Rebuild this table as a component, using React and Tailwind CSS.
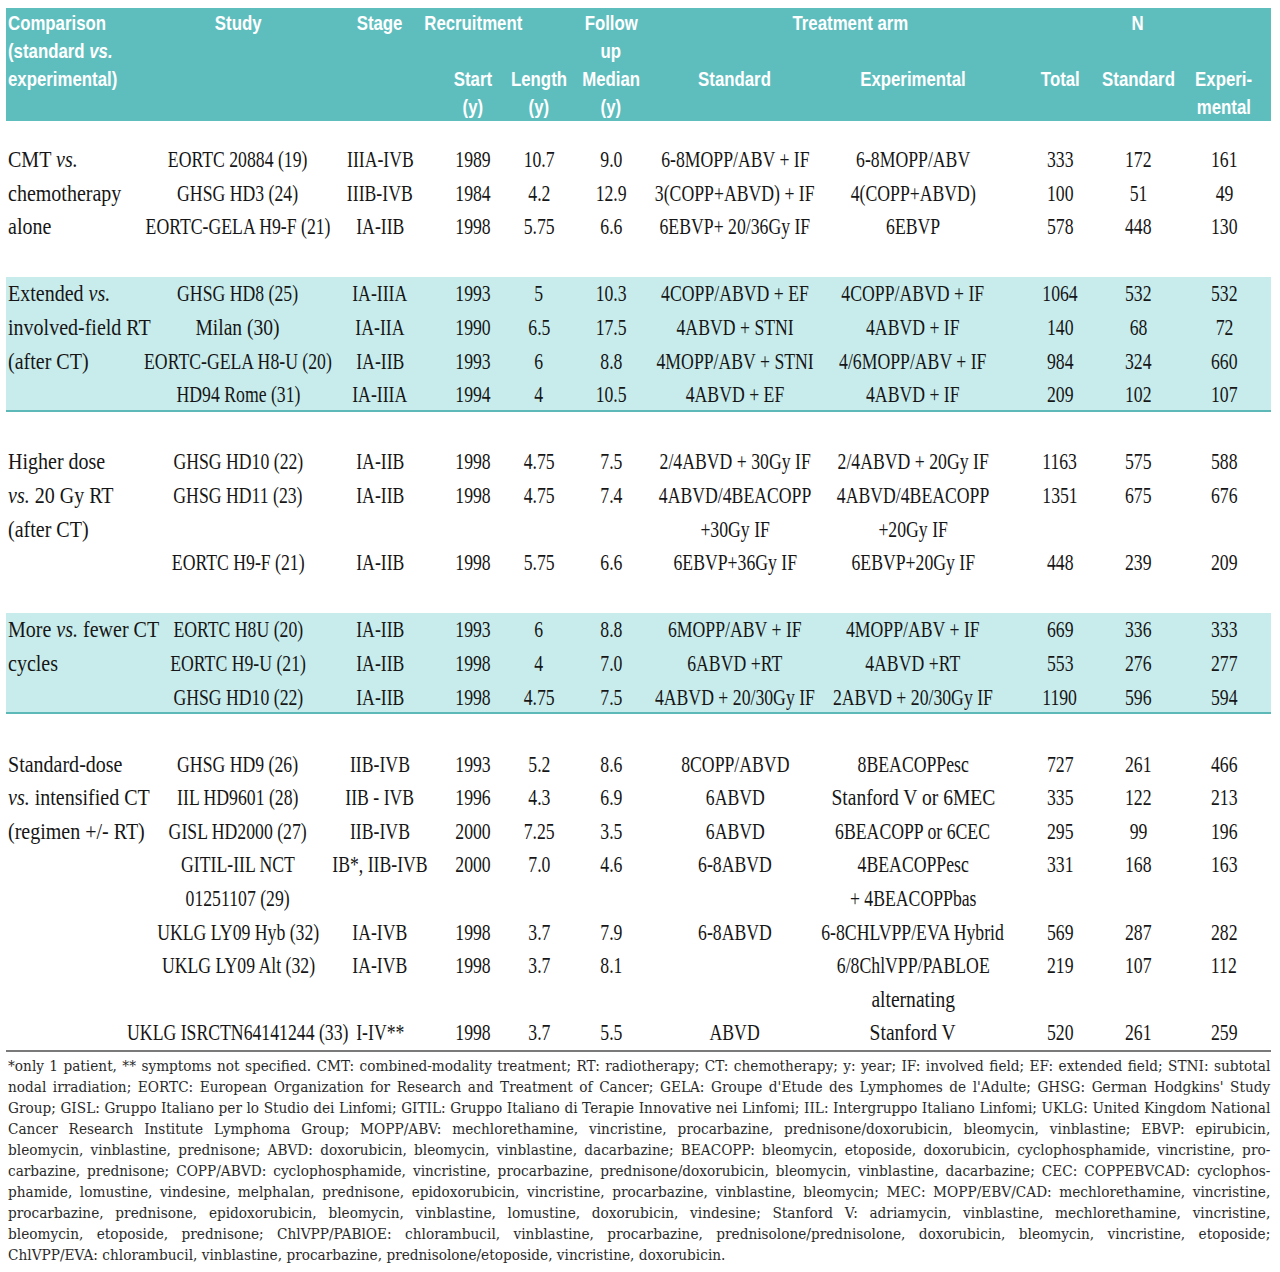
import React from 'react';

const GRID = 'grid grid-cols-[143px_178px_106px_80px_52px_92px_156px_200px_94px_62px_110px]';

const groups = [
  {
    shaded: false,
    span: 'row-span-3',
    comparison: [<>CMT <i>vs.</i></>, 'chemotherapy', 'alone'],
    rows: [
      ['EORTC 20884 (19)', 'IIIA-IVB', '1989', '10.7', '9.0', '6-8MOPP/ABV + IF', '6-8MOPP/ABV', '333', '172', '161'],
      ['GHSG HD3 (24)', 'IIIB-IVB', '1984', '4.2', '12.9', '3(COPP+ABVD) + IF', '4(COPP+ABVD)', '100', '51', '49'],
      ['EORTC-GELA H9-F (21)', 'IA-IIB', '1998', '5.75', '6.6', '6EBVP+ 20/36Gy IF', '6EBVP', '578', '448', '130'],
    ],
  },
  {
    shaded: true,
    span: 'row-span-4',
    comparison: [<>Extended <i>vs.</i></>, 'involved-field RT', '(after CT)'],
    rows: [
      ['GHSG HD8 (25)', 'IA-IIIA', '1993', '5', '10.3', '4COPP/ABVD + EF', '4COPP/ABVD + IF', '1064', '532', '532'],
      ['Milan (30)', 'IA-IIA', '1990', '6.5', '17.5', '4ABVD + STNI', '4ABVD + IF', '140', '68', '72'],
      ['EORTC-GELA H8-U (20)', 'IA-IIB', '1993', '6', '8.8', '4MOPP/ABV + STNI', '4/6MOPP/ABV + IF', '984', '324', '660'],
      ['HD94 Rome (31)', 'IA-IIIA', '1994', '4', '10.5', '4ABVD + EF', '4ABVD + IF', '209', '102', '107'],
    ],
  },
  {
    shaded: false,
    span: 'row-span-3',
    comparison: ['Higher dose', <><i>vs.</i> 20 Gy RT</>, '(after CT)'],
    rows: [
      ['GHSG HD10 (22)', 'IA-IIB', '1998', '4.75', '7.5', '2/4ABVD + 30Gy IF', '2/4ABVD + 20Gy IF', '1163', '575', '588'],
      ['GHSG HD11 (23)', 'IA-IIB', '1998', '4.75', '7.4', ['4ABVD/4BEACOPP', '+30Gy IF'], ['4ABVD/4BEACOPP', '+20Gy IF'], '1351', '675', '676'],
      ['EORTC H9-F (21)', 'IA-IIB', '1998', '5.75', '6.6', '6EBVP+36Gy IF', '6EBVP+20Gy IF', '448', '239', '209'],
    ],
  },
  {
    shaded: true,
    span: 'row-span-3',
    comparison: [<>More <i>vs.</i> fewer CT</>, 'cycles'],
    rows: [
      ['EORTC H8U (20)', 'IA-IIB', '1993', '6', '8.8', '6MOPP/ABV + IF', '4MOPP/ABV + IF', '669', '336', '333'],
      ['EORTC H9-U (21)', 'IA-IIB', '1998', '4', '7.0', '6ABVD +RT', '4ABVD +RT', '553', '276', '277'],
      ['GHSG HD10 (22)', 'IA-IIB', '1998', '4.75', '7.5', '4ABVD + 20/30Gy IF', '2ABVD + 20/30Gy IF', '1190', '596', '594'],
    ],
  },
  {
    shaded: false,
    span: 'row-span-7',
    comparison: ['Standard-dose', <><i>vs.</i> intensified CT</>, '(regimen +/- RT)'],
    rows: [
      ['GHSG HD9 (26)', 'IIB-IVB', '1993', '5.2', '8.6', '8COPP/ABVD', '8BEACOPPesc', '727', '261', '466'],
      ['IIL HD9601 (28)', 'IIB - IVB', '1996', '4.3', '6.9', '6ABVD', 'Stanford V or 6MEC', '335', '122', '213'],
      ['GISL HD2000 (27)', 'IIB-IVB', '2000', '7.25', '3.5', '6ABVD', '6BEACOPP or 6CEC', '295', '99', '196'],
      [['GITIL-IIL NCT', '01251107 (29)'], 'IB*, IIB-IVB', '2000', '7.0', '4.6', '6-8ABVD', ['4BEACOPPesc', '+ 4BEACOPPbas'], '331', '168', '163'],
      ['UKLG LY09 Hyb (32)', 'IA-IVB', '1998', '3.7', '7.9', '6-8ABVD', '6-8CHLVPP/EVA Hybrid', '569', '287', '282'],
      ['UKLG LY09 Alt (32)', 'IA-IVB', '1998', '3.7', '8.1', '', ['6/8ChlVPP/PABLOE', 'alternating'], '219', '107', '112'],
      ['UKLG ISRCTN64141244 (33)', 'I-IV**', '1998', '3.7', '5.5', 'ABVD', 'Stanford V', '520', '261', '259'],
    ],
  },
];

const footnote = [
  '*only 1 patient, ** symptoms not specified. CMT: combined-modality treatment; RT: radiotherapy; CT: chemotherapy; y: year; IF: involved field; EF: extended field; STNI: subtotal',
  "nodal irradiation; EORTC: European Organization for Research and Treatment of Cancer; GELA: Groupe d'Etude des Lymphomes de l'Adulte; GHSG: German Hodgkins' Study",
  'Group; GISL: Gruppo Italiano per lo Studio dei Linfomi; GITIL: Gruppo Italiano di Terapie Innovative nei Linfomi; IIL: Intergruppo Italiano Linfomi; UKLG: United Kingdom National',
  'Cancer Research Institute Lymphoma Group; MOPP/ABV: mechlorethamine, vincristine, procarbazine, prednisone/doxorubicin, bleomycin, vinblastine; EBVP: epirubicin,',
  'bleomycin, vinblastine, prednisone; ABVD: doxorubicin, bleomycin, vinblastine, dacarbazine; BEACOPP: bleomycin, etoposide, doxorubicin, cyclophosphamide, vincristine, pro-',
  'carbazine, prednisone; COPP/ABVD: cyclophosphamide, vincristine, procarbazine, prednisone/doxorubicin, bleomycin, vinblastine, dacarbazine; CEC: COPPEBVCAD: cyclophos-',
  'phamide, lomustine, vindesine, melphalan, prednisone, epidoxorubicin, vincristine, procarbazine, vinblastine, bleomycin; MEC: MOPP/EBV/CAD: mechlorethamine, vincristine,',
  'procarbazine, prednisone, epidoxorubicin, bleomycin, vinblastine, lomustine, doxorubicin, vindesine; Stanford V: adriamycin, vinblastine, mechlorethamine, vincristine,',
  'bleomycin, etoposide, prednisone; ChlVPP/PABlOE: chlorambucil, vinblastine, procarbazine, prednisolone/prednisolone, doxorubicin, bleomycin, vincristine, etoposide;',
  'ChlVPP/EVA: chlorambucil, vinblastine, procarbazine, prednisolone/etoposide, vincristine, doxorubicin.',
];

// mostly lower-case text sits wider in the original's condensed face
const isLowerHeavy = (s) => {
  const letters = s.replace(/[^A-Za-z]/g, '');
  const lower = s.replace(/[^a-z]/g, '');
  return letters.length > 0 && lower.length / letters.length > 0.5;
};

const Cell = ({ value }) => {
  const lines = Array.isArray(value) ? value : [value];
  return (
    <div className="flex flex-col items-center">
      {lines.map((line, i) =>
        line ? (
          <span
            key={i}
            className={`block whitespace-nowrap ${isLowerHeavy(line) ? 'scale-x-[0.85]' : 'scale-x-[0.77]'}`}
          >
            {line}
          </span>
        ) : null
      )}
    </div>
  );
};

const Group = ({ group }) => (
  <div
    className={`${GRID} leading-[33.6px] ${group.shaded ? 'bg-[#c8ecec] shadow-[inset_0_-2px_0_#5db8b8]' : ''}`}
  >
    <div className={`col-start-1 row-start-1 ${group.span} flex flex-col items-start pl-[2px]`}>
      {group.comparison.map((line, i) => (
        <span key={i} className="block whitespace-nowrap origin-left scale-x-[0.87]">
          {line}
        </span>
      ))}
    </div>
    {group.rows.map((row) => row.map((value, j) => <Cell key={`${row[0]}-${j}`} value={value} />))}
  </div>
);

const H = ({ className, children }) => (
  <div className={`${className} flex justify-center`}>
    <span className="block whitespace-nowrap scale-x-[0.8]">{children}</span>
  </div>
);

const Header = () => (
  <div
    className={`${GRID} grid-rows-[28px_28px_28px_28px] h-[113px] pt-[1px] bg-[#5ebebe] text-white font-bold text-[21px] leading-[28px] font-['Liberation_Sans',Arial,sans-serif]`}
  >
    <div className="col-start-1 row-start-1 row-span-3 flex flex-col items-start pl-[2px]">
      <span className="block whitespace-nowrap origin-left scale-x-[0.8]">Comparison</span>
      <span className="block whitespace-nowrap origin-left scale-x-[0.8]">
        (standard <i>vs.</i>
      </span>
      <span className="block whitespace-nowrap origin-left scale-x-[0.8]">experimental)</span>
    </div>
    <H className="col-start-2 row-start-1">Study</H>
    <H className="col-start-3 row-start-1">Stage</H>
    <H className="col-start-4 row-start-1">Recruitment</H>
    <H className="col-start-4 row-start-3">Start</H>
    <H className="col-start-4 row-start-4">(y)</H>
    <H className="col-start-5 row-start-3">Length</H>
    <H className="col-start-5 row-start-4">(y)</H>
    <H className="col-start-6 row-start-1">Follow</H>
    <H className="col-start-6 row-start-2">up</H>
    <H className="col-start-6 row-start-3">Median</H>
    <H className="col-start-6 row-start-4">(y)</H>
    <H className="col-start-7 col-span-2 row-start-1 pl-[30px]">Treatment arm</H>
    <H className="col-start-7 row-start-3">Standard</H>
    <H className="col-start-8 row-start-3">Experimental</H>
    <H className="col-start-10 row-start-1">N</H>
    <H className="col-start-9 row-start-3">Total</H>
    <H className="col-start-10 row-start-3">Standard</H>
    <H className="col-start-11 row-start-3">Experi-</H>
    <H className="col-start-11 row-start-4">mental</H>
  </div>
);

export default function App() {
  return (
    <div className="min-h-[1272px] bg-white pt-[8px]">
      <div className="ml-[6px] w-[1265px]">
        <Header />
        <div className="text-[23px] text-[#161616] font-['Liberation_Serif','Times_New_Roman',serif]">
          <div className="h-[22px]" />
          {groups.map((group, i) => (
            <React.Fragment key={i}>
              {i > 0 && <div className="h-[33.6px]" />}
              <Group group={group} />
            </React.Fragment>
          ))}
        </div>
        <div className="border-t-2 border-[#7a7a7a] pt-[4px] overflow-hidden">
          <div className="w-[1292px] ml-[2px] origin-left scale-x-[0.977] text-[14px] leading-[21px] text-[#2a2a2a] font-['DejaVu_Serif',serif]">
            {footnote.map((line, i) => (
              <div key={i} className={i < footnote.length - 1 ? 'text-justify [text-align-last:justify]' : 'text-left'}>
                {line}
              </div>
            ))}
          </div>
        </div>
      </div>
    </div>
  );
}
